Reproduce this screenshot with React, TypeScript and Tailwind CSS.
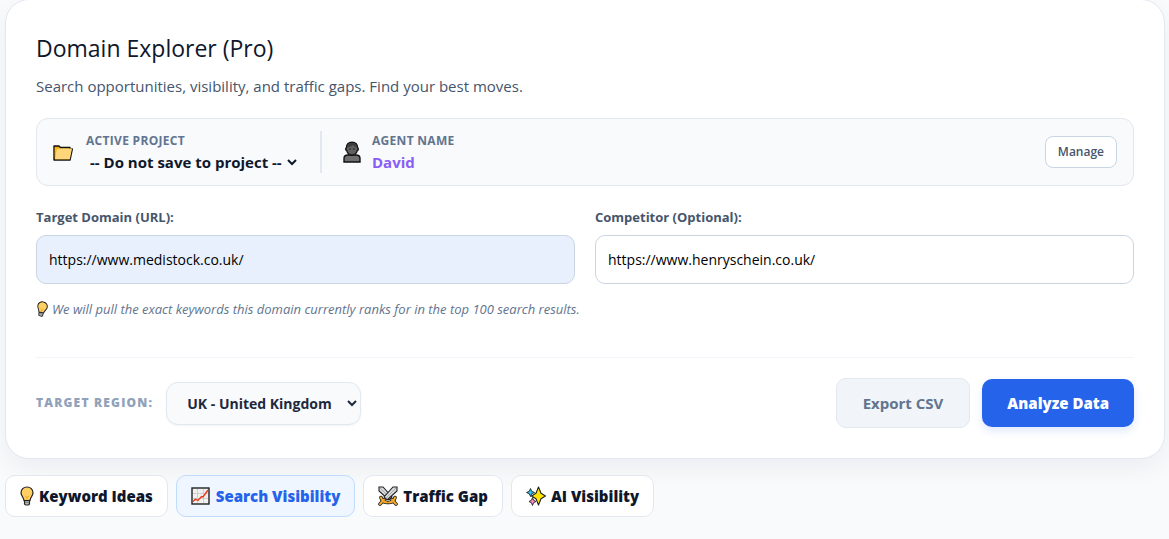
import React, { useState } from 'react';

type TabId = 'ideas' | 'visibility' | 'gap' | 'ai';

const FolderIcon = () => (
  <svg width="20" height="20" viewBox="0 0 20 20" aria-hidden="true">
    <path d="M1 18V4h5l1.500 1.500H17V7h2.300L17 18z" fill="#e5a00d" stroke="#111" strokeWidth="1.400" strokeLinejoin="round" />
    <path d="M3.500 6.500H19L16.800 17.300H2z" fill="#ffd679" />
    <path d="M1.800 16V5.500h2.400z" fill="#ffb900" />
  </svg>
);

const AgentIcon = () => (
  <svg width="20" height="22" viewBox="0 0 20 22" aria-hidden="true">
    <path d="M2 21v-3.500Q2 14 6 14h8q4 0 4 3.500V21z" fill="#6f6f6f" stroke="#111" strokeWidth="1.400" />
    <path d="M10 1.200c-3.800 0-5.600 2.400-5.500 5.300-1.200.8-1 2.500.2 3.100C5.500 12.300 7.300 14 10 14s4.500-1.700 5.300-4.400c1.200-.6 1.400-2.300.2-3.100.1-2.900-1.700-5.300-5.500-5.300z" fill="#606060" stroke="#111" strokeWidth="1.400" />
    <path d="M5 6c0-3 2-4.300 5-4.300S15 3 15 6c-2 0-3-1-4-2-1.500 1.500-3.500 2-6 2z" fill="#3c3c3c" />
    <circle cx="8" cy="8" r=".7" fill="#111" />
    <circle cx="12" cy="8" r=".7" fill="#111" />
  </svg>
);

const BulbIcon = ({ className = '' }: { className?: string }) => (
  <svg viewBox="0 0 14 20" className={className} aria-hidden="true">
    <path d="M4.500 14h5v3.500q0 1.500-1.500 1.500H6q-1.500 0-1.500-1.500z" fill="#b4b8be" stroke="#222" strokeWidth="1.200" />
    <path d="M7 1C3.500 1 1 3.500 1 6.700c0 3 2.500 4.300 3 7.800h6c.5-3.500 3-4.800 3-7.800C13 3.500 10.500 1 7 1z" fill="#ffcf63" stroke="#222" strokeWidth="1.200" />
    <path d="M5 10l2 1.500L9 10M7 11.500V14" fill="none" stroke="#f5a623" strokeWidth="1" />
    <path d="M4.800 16.200h4.400" stroke="#6f747b" />
  </svg>
);

const ChartIcon = () => (
  <svg width="20" height="18" viewBox="0 0 20 18" aria-hidden="true">
    <rect x="1" y="1" width="17" height="16" fill="#f0f0f0" stroke="#222" strokeWidth="1.400" />
    <path d="M6.500 2v14M12.500 2v14M2 6.500h15M2 11.500h15" stroke="#cfcfcf" />
    <path d="M2 14.500l2.500-2.300L7 13.500l3.500-4 1.500.5L17 3" fill="none" stroke="#f03a17" strokeWidth="1.400" />
  </svg>
);

const SwordsIcon = () => (
  <svg width="20" height="20" viewBox="0 0 20 20" aria-hidden="true">
    <path d="M1 1h4l9 10-3 3L1 5z" fill="#d8dade" stroke="#222" strokeWidth="1.100" />
    <path d="M2 2l10 10" stroke="#a9adb3" />
    <path d="M19 1h-4L6 11l3 3L19 5z" fill="#d8dade" stroke="#222" strokeWidth="1.100" />
    <path d="M18 2L8 12" stroke="#a9adb3" />
    <path d="M3 11.500q1 4.500 6 5M17 11.500q-1 4.500-6 5M6 14l-4 4M14 14l4 4" fill="none" stroke="#222" strokeWidth="3.600" strokeLinecap="round" />
    <path d="M3 11.500q1 4.500 6 5M17 11.500q-1 4.500-6 5M6 14l-4 4M14 14l4 4" fill="none" stroke="#f7a928" strokeWidth="2" strokeLinecap="round" />
  </svg>
);

const SparklesIcon = () => (
  <svg width="20" height="20" viewBox="0 0 20 20" aria-hidden="true">
    <path d="M4.500 2.500l1.200 2.800L8.500 6.500 5.700 7.700l-1.200 2.800-1.200-2.800L.5 6.500l2.800-1.200z" fill="#2fc4f5" stroke="#222" strokeWidth=".9" />
    <path d="M6.500 11.500l1 2.700 2.500 1.300-2.500 1.300-1 2.700-1-2.700L3 15.500l2.500-1.300z" fill="#f78ac0" stroke="#222" strokeWidth=".9" />
    <path d="M12.500 1l2.500 6.300L19.500 10 15 12.700 12.500 19 10 12.700 5.500 10 10 7.300z" fill="#ffe600" stroke="#222" strokeWidth="1.100" strokeLinejoin="round" />
  </svg>
);

const tabs: { id: TabId; label: string; icon: React.ReactNode }[] = [
  { id: 'ideas', label: 'Keyword Ideas', icon: <BulbIcon className="h-5 w-[14px]" /> },
  { id: 'visibility', label: 'Search Visibility', icon: <ChartIcon /> },
  { id: 'gap', label: 'Traffic Gap', icon: <SwordsIcon /> },
  { id: 'ai', label: 'AI Visibility', icon: <SparklesIcon /> },
];

export default function App() {
  const [activeTab, setActiveTab] = useState<TabId>('visibility');
  const [target, setTarget] = useState('https://www.medistock.co.uk/');
  const [competitor, setCompetitor] = useState('https://www.henryschein.co.uk/');

  return (
    <div className="flex min-h-screen flex-col bg-[#f8fafc] pl-[5px] pr-1 font-['Open_Sans',sans-serif] text-slate-900">
      <main className="-mt-px rounded-3xl border border-slate-200 bg-white p-[30px] shadow-[0_10px_25px_rgba(15,23,42,0.05)]">
        <h1 className="text-[23px] leading-9">Domain Explorer (Pro)</h1>
        <p className="mt-2 text-[15px] leading-6 text-slate-600">
          Search opportunities, visibility, and traffic gaps. Find your best moves.
        </p>

        {/* Project bar */}
        <section className="mt-5 flex items-center justify-between rounded-xl border border-slate-200 bg-slate-50 px-4 py-3">
          <div className="flex items-center">
            <div className="flex w-[267px] items-center gap-[13px]">
              <FolderIcon />
              <div className="flex flex-col">
                <label htmlFor="project" className="text-xs leading-5 font-bold tracking-wide text-slate-500">ACTIVE PROJECT</label>
                <select id="project" className="h-[22px] w-[214px] bg-transparent text-[15px] leading-5 font-bold">
                  <option>-- Do not save to project --</option>
                </select>
              </div>
            </div>
            <div className="flex items-center gap-[10px] border-l-2 border-slate-200 pl-5">
              <AgentIcon />
              <div>
                <div className="text-xs leading-5 font-bold tracking-wide text-slate-500">AGENT NAME</div>
                <div className="text-[15px] leading-[22px] font-bold text-[#8b5cf6]">David</div>
              </div>
            </div>
          </div>
          <button className="h-8 rounded-lg border border-slate-300 bg-white px-3 text-xs font-semibold text-slate-600">Manage</button>
        </section>

        {/* Domains */}
        <div className="mt-5 grid grid-cols-2 gap-5">
          <div>
            <label htmlFor="target" className="block text-[13px] leading-[22px] font-bold text-slate-600">Target Domain (URL):</label>
            <input
              id="target"
              value={target}
              onChange={(e) => setTarget(e.target.value)}
              className="mt-[7px] h-[49px] w-full rounded-[10px] border border-slate-300 bg-[#e8f0fe] px-3 text-sm text-black"
            />
          </div>
          <div>
            <label htmlFor="competitor" className="block text-[13px] leading-[22px] font-bold text-slate-600">Competitor (Optional):</label>
            <input
              id="competitor"
              value={competitor}
              onChange={(e) => setCompetitor(e.target.value)}
              className="mt-[7px] h-[49px] w-full rounded-[10px] border border-slate-300 bg-white px-3 text-sm text-black"
            />
          </div>
        </div>
        <p className="mt-[15px] flex items-center gap-1 text-[13px] leading-5 text-slate-500 italic">
          <BulbIcon className="h-4 w-3 rotate-12" />
          We will pull the exact keywords this domain currently ranks for in the top 100 search results.
        </p>

        {/* Actions */}
        <div className="mt-[38px] flex items-center justify-between border-t border-slate-100 pt-5">
          <div className="flex items-center gap-[13px]">
            <label htmlFor="region" className="text-xs font-extrabold tracking-widest text-slate-400">TARGET REGION:</label>
            <select id="region" className="h-[43px] w-[195px] rounded-xl border border-slate-200 bg-slate-50 pl-4 text-sm font-bold text-slate-800 shadow-xs">
              <option>UK - United Kingdom</option>
            </select>
          </div>
          <div className="flex items-center gap-3">
            <button className="h-[50px] rounded-[10px] border border-slate-200 bg-slate-100 px-[26px] text-[15px] font-bold text-slate-500">Export CSV</button>
            <button className="h-12 rounded-[10px] bg-[#2563eb] px-[25px] text-[15px] font-extrabold text-white shadow-[0_4px_8px_rgba(37,99,235,0.15)]">Analyze Data</button>
          </div>
        </div>
      </main>

      <nav className="mt-4 flex gap-2">
        {tabs.map(tab => (
          <button
            key={tab.id}
            onClick={() => setActiveTab(tab.id)}
            className={`flex h-[42px] items-center gap-[5px] rounded-[10px] border px-[14px] text-[15px] font-extrabold ${activeTab === tab.id ? 'border-[#bfdbfe] bg-[#eff6ff] text-[#2563eb]' : 'border-slate-200 bg-white text-slate-900'}`}
          >
            {tab.icon}
            {tab.label}
          </button>
        ))}
      </nav>
    </div>
  );
}
